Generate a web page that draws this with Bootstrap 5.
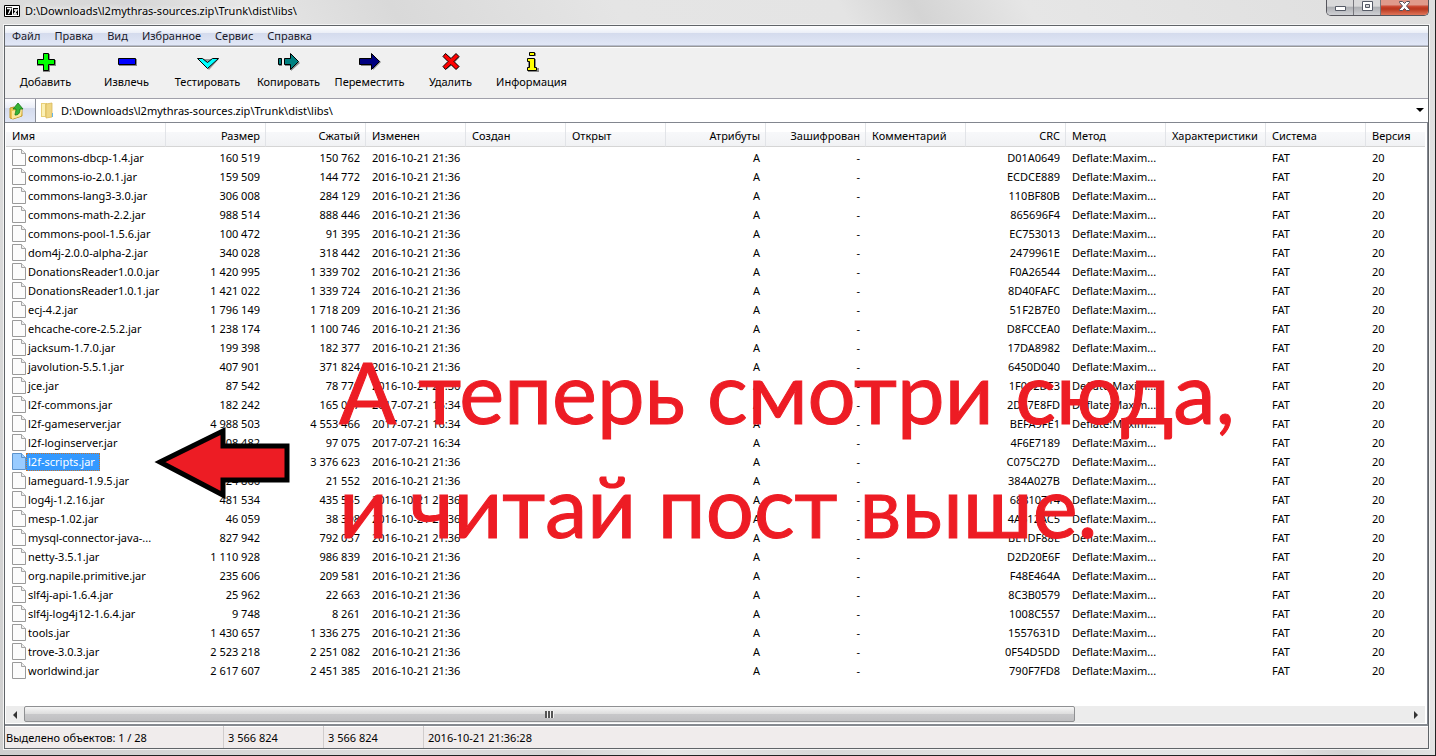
<!DOCTYPE html>
<html lang="ru">
<head>
<meta charset="utf-8">
<meta name="viewport" content="width=device-width, initial-scale=1">
<title>D:\Downloads\l2mythras-sources.zip\Trunk\dist\libs\</title>
<link href="https://cdn.jsdelivr.net/npm/bootstrap@5.3.0/dist/css/bootstrap.min.css" rel="stylesheet">
<style>
  body { font: 11px/16px "Noto Sans", "Open Sans", sans-serif; color: #000; background: #d9d9d9; }
  button, input { font: inherit; color: inherit; }
  button { background: none; border: 0; padding: 0; }

  /* window frame */
  .win { padding: 0 6px 6px 4px; border-right: 1px solid #222; border-bottom: 1px solid #222;
    background: linear-gradient(60deg, #cfcfcf 0, #dedede 22%, #d6d6d6 30%, #e6e6e6 36%, #d9d9d9 44%, #e5e5e5 56%, #e4e4e4 68%, #d4d4d4 72%, #e6e6e6 78%, #dedede 100%); }
  .title-bar { height: 25px; }
  .title-bar .caption { padding: 3px 0 6px; text-shadow: 0 0 6px #fff, 0 0 6px #fff; }
  .title-bar .app-icon { margin: 4px 5px 0 0; }
  .sys-btns { height: 16px; border: 1px solid #55555c; border-top: 0; border-radius: 0 0 5px 5px; overflow: hidden; }
  .sys-btns button { height: 15px; width: 27px; border-right: 1px solid #77777d; background: linear-gradient(#d9d9da 0 40%, #aeb0b4 50%, #cfd0d4); }
  .sys-btns .close-btn { width: 47px; border: 0; background: linear-gradient(#e09a8b 0 30%, #c8412a 45%, #b8381f 60%, #e0755a); }
  .client { border: 1px solid #606468; outline: 1px solid #f4f4f4; background: #f0f0f0; }

  .menu-bar { height: 20px; background: linear-gradient(#fff, #eaeef7 38%, #d4dbed 38%, #e1e7f6); border-bottom: 1px solid #b6bccc; }
  .menu-bar button { padding: 0 7px; color: #1a1a2a; }
  .tool-bar { height: 52px; border-top: 1px solid #989898; box-shadow: inset 0 1px #fff; }
  .tool-bar button { width: 81px; padding-bottom: 5px; }
  .tool-bar svg { width: 24px; height: 24px; display: block; margin: 0 auto; }

  .addr { height: 25px; border-top: 1px solid #a0a0aa; background: #fff; border-bottom: 1px solid #82868f; }
  .up-btn { width: 31px; background: linear-gradient(#fdfdff, #e9edf7 40%, #d4dbed 40%, #e1e7f6); border-right: 1px solid #8a8e98; }
  .addr input { border: 0; outline: 0; background: none; padding: 0 0 0 7px; min-width: 0; }

  .list-area { background: #fff; padding: 0 2px 1px 1px; border-right: 1px solid #82868f; overflow: hidden; }
  .files { table-layout: fixed; width: 100%; border-collapse: separate; border-spacing: 0; }
  .files th { height: 24px; padding: 2px 6px 0; font-weight: 400; vertical-align: middle; white-space: nowrap; border-bottom: 1px solid #d5d5d5; border-right: 1px solid #e2e4e8;
    background: linear-gradient(#fff 0 40%, #f7f8fa 41%, #f1f2f4); }
  .files th.text-end { padding-right: 5px; }
  .files th:last-child { border-right: 0; }
  .files td { height: 19px; padding: 0 6px; vertical-align: middle; white-space: nowrap; overflow: hidden; }
  .files tbody::before { content: ""; display: block; height: 1px; }
  .files svg { width: 14px; height: 17px; flex: none; }
  .fname { padding: 1px 1px 1px 2px; }
  .sel .fname { background: #3399ff; color: #fff; outline: 1px dotted #c8742a; outline-offset: -1px; padding-right: 5px; }
  .sel svg path { fill: #99ccff; stroke: #5b93cc; }

  .scroll-bar { height: 17px; background: #ececec; }
  .scroll-bar button { width: 18px; }
  .thumb { width: 76%; height: 16px; border: 1px solid #8f9092; border-radius: 2px; background: linear-gradient(#f6f6f6, #dedede 48%, #c8c8ca 50%, #bfbfc1); }
  .status { height: 24px; background: #f0ecec; border-top: 2px solid #868a90; box-shadow: inset 0 1px #fff; }
  .status span { width: 100px; padding: 4px 4px 0; border-left: 1px solid #d0cccc; }
  .status span:first-child { width: 218px; padding-left: 1px; border: 0; }

  /* annotation drawn over the list */
  .note { left: 334px; top: 211px; font: 85px/114px Lato, sans-serif; color: #ed1c24; -webkit-text-stroke: 1px #ed1c24; white-space: nowrap; pointer-events: none; }
  .pointer { left: 148px; top: 301px; width: 138px; height: 76px; pointer-events: none; }
</style>
</head>
<body>
<div class="win min-vh-100 d-flex flex-column">
  <header class="title-bar d-flex align-items-start">
    <svg class="app-icon" width="16" height="14" viewBox="0 0 16 14" aria-hidden="true"><path d="M.5 1.500h15v11H.5z" fill="#fff" stroke="#000"/><path d="M2 3h6v8H2zM9 4h5v7H9z"/><path d="M3 4.500h4L4.500 10M10 6h3l-3 4h3" fill="none" stroke="#fff" stroke-width="1.300"/></svg>
    <span class="caption">D:\Downloads\l2mythras-sources.zip\Trunk\dist\libs\</span>
    <div class="sys-btns d-flex ms-auto">
      <button type="button" aria-label="Свернуть"><svg class="d-block mx-auto" width="13" height="15"><path d="M1.500 6.500h10v4h-10z" fill="#fff" stroke="#555a66"/></svg></button>
      <button type="button" aria-label="Развернуть"><svg class="d-block mx-auto" width="13" height="15"><path d="M1.500 1.500h10v9h-10zM4.500 4.500h4v3h-4z" fill="#fff" fill-rule="evenodd" stroke="#555a66"/></svg></button>
      <button type="button" class="close-btn" aria-label="Закрыть"><svg class="d-block mx-auto" width="13" height="15"><path d="M1.500 1.500h3l2 2 2-2h3v1L8.500 6l3 3.500v1h-3l-2-2-2 2h-3v-1L4.500 6l-3-3.500z" fill="#fff" stroke="#53505a"/></svg></button>
    </div>
  </header>

  <main class="client flex-grow-1 d-flex flex-column">
    <nav class="menu-bar d-flex flex-shrink-0">
      <button type="button">Файл</button><button type="button">Правка</button><button type="button">Вид</button><button type="button">Избранное</button><button type="button">Сервис</button><button type="button">Справка</button>
    </nav>

    <div class="tool-bar d-flex" role="toolbar">
      <button type="button"><svg viewBox="0 0 24 24"><path d="M10 5h7v6h6v6h-6v6h-7v-6H4v-6h6z" fill="#888" transform="translate(-1 -1)"/><path d="M9.500 3.500h5v6h6v5h-6v6h-5v-6h-6v-5h6z" fill="#0f0" stroke="#000"/></svg>Добавить</button>
      <button type="button"><svg viewBox="0 0 24 24"><path d="M4 9h18v7H4z" fill="#888"/><path d="M3.500 8.500h17v6h-17z" fill="#00f" stroke="#000"/></svg>Извлечь</button>
      <button type="button"><svg viewBox="0 0 24 24"><path d="M3 9h20L13 20z" fill="#999"/><path d="M1.500 8.500h5l5 4 5-4h6L11.500 18.500z" fill="#0ff" stroke="#000"/></svg>Тестировать</button>
      <button type="button"><svg viewBox="0 0 24 24"><path d="M2 9h3v7H2zM8 9h6V5l9 8-9 8v-5H8z" fill="#888"/><path d="M1.500 8.500h3v6h-3zM7.500 8.500h6v-5l8 8-8 8v-5h-6z" fill="#008080" stroke="#000"/></svg>Копировать</button>
      <button type="button"><svg viewBox="0 0 24 24"><path d="M3 9h12V5l8 7-8 8v-4H3z" fill="#888"/><path d="M1.500 8.500h12v-5l8 8-8 8v-5h-12z" fill="#000080" stroke="#000"/></svg>Переместить</button>
      <button type="button"><svg viewBox="0 0 24 24"><path d="M7.500 4.500l5 5 5-5 3 3-5 5 5 4-3 3-5-4-5 4-2-3 5-4-5-5z" fill="#888"/><path d="M6.500 3.500l5.500 5 5-5 3 3-5 5 5 5-3 3-5-5-5.500 5-2.500-3 5-5-5-5z" fill="#f00" stroke="#000"/></svg>Удалить</button>
      <button type="button"><svg viewBox="0 0 24 24"><path d="M10 3h6v3h-6zM8 9h8v9h3v4H8z" fill="#888"/><path d="M9.500 2.500h5v3h-5zM7.500 8.500h7v9h2v3h-9v-3h2v-6h-2z" fill="#ff0" stroke="#000"/></svg>Информация</button>
    </div>

    <div class="addr d-flex align-items-stretch">
      <button type="button" class="up-btn" aria-label="Вверх"><svg class="d-block ms-1" width="18" height="18" viewBox="0 0 18 18"><path d="M1 6l4-1 1 2 7-1v8L4 17l-3-1z" fill="#eec64f" stroke="#c39a2c"/><path d="M3 9l10-2-1 7-9 3z" fill="#fbe79a"/><path d="M7 13c3 0 4-3 4-6h3l-5-6-5 6h3c0 3-1 4-1 6z" fill="#36b336" stroke="#177a17" stroke-width=".8"/></svg></button>
      <label for="path" class="d-flex align-items-center ps-1" aria-label="Путь"><svg width="14" height="17" viewBox="0 0 14 17"><path d="M1 1h6v14H1z" fill="#e8cf78"/><path d="M2 2h3v12H2z" fill="#fbf0b5"/><path d="M6 2l6-1v14l-6 1z" fill="#efd683" stroke="#d9b95b" stroke-width=".8"/><path d="M12 11h1v4h-1z" fill="#65b5e8"/></svg></label>
      <input id="path" class="flex-grow-1" type="text" value="D:\Downloads\l2mythras-sources.zip\Trunk\dist\libs\" spellcheck="false">
      <button type="button" class="px-1" aria-label="История"><svg class="d-block" width="8" height="5"><path d="M0 0h8L4 4z"/></svg></button>
    </div>

    <section class="list-area flex-grow-1 d-flex flex-column position-relative">
      <table class="files">
        <colgroup><col style="width:160px"><col span="12" style="width:100px"><col></colgroup>
        <thead><tr>
          <th>Имя</th><th class="text-end">Размер</th><th class="text-end">Сжатый</th><th>Изменен</th><th>Создан</th><th>Открыт</th><th class="text-end">Атрибуты</th><th class="text-end">Зашифрован</th><th>Комментарий</th><th class="text-end">CRC</th><th>Метод</th><th>Характеристики</th><th>Система</th><th>Версия</th>
        </tr></thead>
        <tbody id="rows"></tbody>
      </table>
      <div class="scroll-bar d-flex align-items-stretch mt-auto">
        <button type="button" aria-label="Влево"><svg class="d-block mx-auto" width="5" height="8"><path d="M4 0v8L0 4z" fill="#333"/></svg></button>
        <div class="flex-grow-1"><div class="thumb d-flex align-items-center justify-content-center"><svg width="9" height="7"><path d="M1 0v7M4 0v7M7 0v7" stroke="#555" stroke-width="2"/><path d="M2.500 0v7M5.500 0v7M8.500 0v7" stroke="#f4f4f4"/></svg></div></div>
        <button type="button" aria-label="Вправо"><svg class="d-block mx-auto" width="5" height="8"><path d="M0 0v8l4-4z" fill="#333"/></svg></button>
      </div>
      <svg class="pointer position-absolute" viewBox="0 0 138 76" aria-hidden="true"><path d="M7 38L70 7v15h64v34H70v15z" fill="#ed1c24" stroke="#000" stroke-width="5"/></svg>
      <div class="note position-absolute">А теперь смотри сюда,<br>и читай пост выше.</div>
    </section>

    <footer class="status d-flex flex-shrink-0">
      <span>Выделено объектов: 1 / 28</span><span>3 566 824</span><span>3 566 824</span><span class="flex-grow-1">2016-10-21 21:36:28</span>
    </footer>
  </main>
</div>
<script src="https://cdn.jsdelivr.net/npm/bootstrap@5.3.0/dist/js/bootstrap.bundle.min.js"></script>
<script>
  const files = `commons-dbcp-1.4.jar|160 519|150 762|D01A0649
commons-io-2.0.1.jar|159 509|144 772|ECDCE889
commons-lang3-3.0.jar|306 008|284 129|110BF80B
commons-math-2.2.jar|988 514|888 446|865696F4
commons-pool-1.5.6.jar|100 472|91 395|EC753013
dom4j-2.0.0-alpha-2.jar|340 028|318 442|2479961E
DonationsReader1.0.0.jar|1 420 995|1 339 702|F0A26544
DonationsReader1.0.1.jar|1 421 022|1 339 724|8D40FAFC
ecj-4.2.jar|1 796 149|1 718 209|51F2B7E0
ehcache-core-2.5.2.jar|1 238 174|1 100 746|D8FCCEA0
jacksum-1.7.0.jar|199 398|182 377|17DA8982
javolution-5.5.1.jar|407 901|371 824|6450D040
jce.jar|87 542|78 776|1F002DE3
l2f-commons.jar|182 242|165 077|2D67E8FD|2017-07-21 16:34
l2f-gameserver.jar|4 988 503|4 553 466|BEFA9FE1|2017-07-21 16:34
l2f-loginserver.jar|108 482|97 075|4F6E7189|2017-07-21 16:34
l2f-scripts.jar|3 566 824|3 376 623|C075C27D
lameguard-1.9.5.jar|24 866|21 552|384A027B
log4j-1.2.16.jar|481 534|435 555|68810714
mesp-1.02.jar|46 059|38 398|4A612AC5
mysql-connector-java-...|827 942|792 037|BE1DF88E
netty-3.5.1.jar|1 110 928|986 839|D2D20E6F
org.napile.primitive.jar|235 606|209 581|F48E464A
slf4j-api-1.6.4.jar|25 962|22 663|8C3B0579
slf4j-log4j12-1.6.4.jar|9 748|8 261|1008C557
tools.jar|1 430 657|1 336 275|1557631D
trove-3.0.3.jar|2 523 218|2 251 082|0F54D5DD
worldwind.jar|2 617 607|2 451 385|790F7FD8`.split("\n").map(l => l.split("|"));
  const icon = '<svg viewBox="0 0 14 17"><path d="M.5 .5h9l4 4v12H.5z" fill="#fcfcfc" stroke="#9a9a9a"/><path d="M9.500 .5v4h4" fill="#eee" stroke="#a5a5a5"/></svg>';
  document.getElementById("rows").innerHTML = files.map(([name, size, packed, crc, date]) =>
    `<tr class="${name === "l2f-scripts.jar" ? "sel" : ""}"><td><div class="d-flex align-items-center">${icon}<span class="fname">${name}</span></div></td>
    <td class="text-end">${size}</td><td class="text-end">${packed}</td><td>${date || "2016-10-21 21:36"}</td><td></td><td></td>
    <td class="text-end">A</td><td class="text-end">-</td><td></td><td class="text-end">${crc}</td><td>Deflate:Maxim...</td><td></td><td>FAT</td><td>20</td></tr>`).join("");
</script>
</body>
</html>
